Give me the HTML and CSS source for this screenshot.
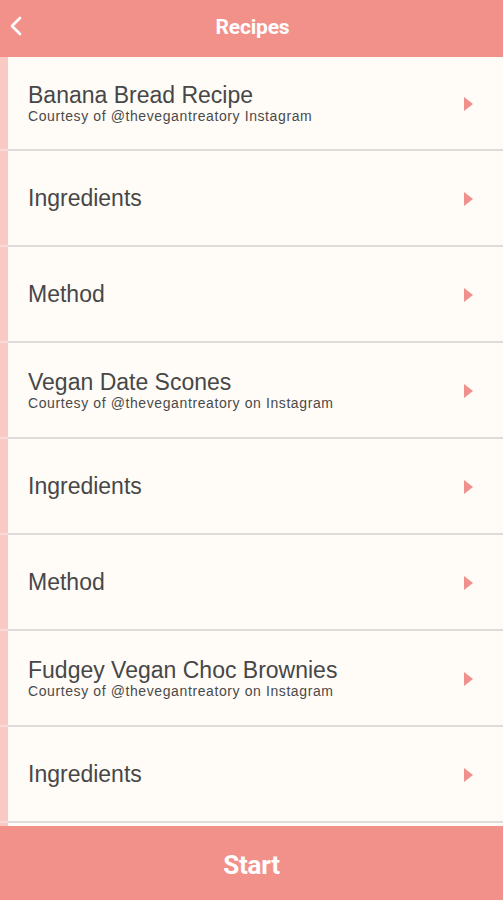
FILE: index.html
```html
<!DOCTYPE html>
<html>
<head>
<meta charset="utf-8">
<link rel="stylesheet" href="styles.css">
</head>
<body>
<div class="app">
  <header class="topbar">
    <svg class="back" width="14" height="20" viewBox="0 0 14 20"><path d="M11 2 L3 10 L11 18" fill="none" stroke="#fff" stroke-width="2.6" stroke-linecap="round" stroke-linejoin="round"/></svg>
    <h1 class="title">Recipes</h1>
  </header>
  <main class="list">
    <div class="row"><div class="strip"></div><div class="cell"><div class="text"><div class="name">Banana Bread Recipe</div><div class="sub">Courtesy of @thevegantreatory Instagram</div></div><span class="arrow"></span></div></div>
    <div class="row"><div class="strip"></div><div class="cell"><div class="text"><div class="name">Ingredients</div></div><span class="arrow"></span></div></div>
    <div class="row"><div class="strip"></div><div class="cell"><div class="text"><div class="name">Method</div></div><span class="arrow"></span></div></div>
    <div class="row"><div class="strip"></div><div class="cell"><div class="text"><div class="name">Vegan Date Scones</div><div class="sub">Courtesy of @thevegantreatory on Instagram</div></div><span class="arrow"></span></div></div>
    <div class="row"><div class="strip"></div><div class="cell"><div class="text"><div class="name">Ingredients</div></div><span class="arrow"></span></div></div>
    <div class="row"><div class="strip"></div><div class="cell"><div class="text"><div class="name">Method</div></div><span class="arrow"></span></div></div>
    <div class="row"><div class="strip"></div><div class="cell"><div class="text"><div class="name">Fudgey Vegan Choc Brownies</div><div class="sub">Courtesy of @thevegantreatory on Instagram</div></div><span class="arrow"></span></div></div>
    <div class="row"><div class="strip"></div><div class="cell"><div class="text"><div class="name">Ingredients</div></div><span class="arrow"></span></div></div>
    <div class="row row-tail"><div class="strip"></div><div class="cell"></div></div>
  </main>
  <footer class="footer">Start</footer>
</div>
</body>
</html>
```
FILE: styles.css
```css
html, body { margin: 0; padding: 0; }
body { background: #fffcf8; font-family: "Liberation Sans", Arial, sans-serif; }
.app { display: flex; flex-direction: column; height: 900px; width: 503px; overflow: hidden; }
.topbar {
  height: 57px; flex: 0 0 57px; background: #f2918a;
  display: flex; align-items: center; justify-content: center; position: relative;
}
.back { position: absolute; left: 9px; top: 16px; }
.title { margin: 0 0 4px 2px; color: #fff; font-family: Roboto, "Liberation Sans", sans-serif; font-weight: 700; font-size: 21px; letter-spacing: -0.2px; }
.list { flex: 1; overflow: hidden; background: #fffcf8; }
.row { display: flex; height: 96px; }
.row:first-child { height: 94px; }
.strip { width: 8px; flex: 0 0 8px; background: #f9c9c4; border-bottom: 2px solid #f3dcd8; box-sizing: border-box; }
.cell {
  flex: 1; display: flex; align-items: center; justify-content: space-between;
  padding: 0 30px 0 20px; border-bottom: 2px solid #dedbd8; box-sizing: border-box;
}
.name { font-size: 23px; color: #474747; line-height: 25px; }
.sub { font-size: 14px; color: #4a4a4a; line-height: 16px; letter-spacing: 0.6px; }
.arrow {
  width: 0; height: 0; border-top: 7px solid transparent; border-bottom: 7px solid transparent;
  border-left: 9px solid #f0908a; margin-top: 2px;
}
.footer {
  flex: 0 0 74px; height: 74px; background: #f2918a; color: #fff;
  display: flex; align-items: center; justify-content: center;
  font-family: Roboto, "Liberation Sans", sans-serif; font-weight: 700; font-size: 26px; letter-spacing: -0.2px;
  padding-top: 4px; box-sizing: border-box;
}
```
